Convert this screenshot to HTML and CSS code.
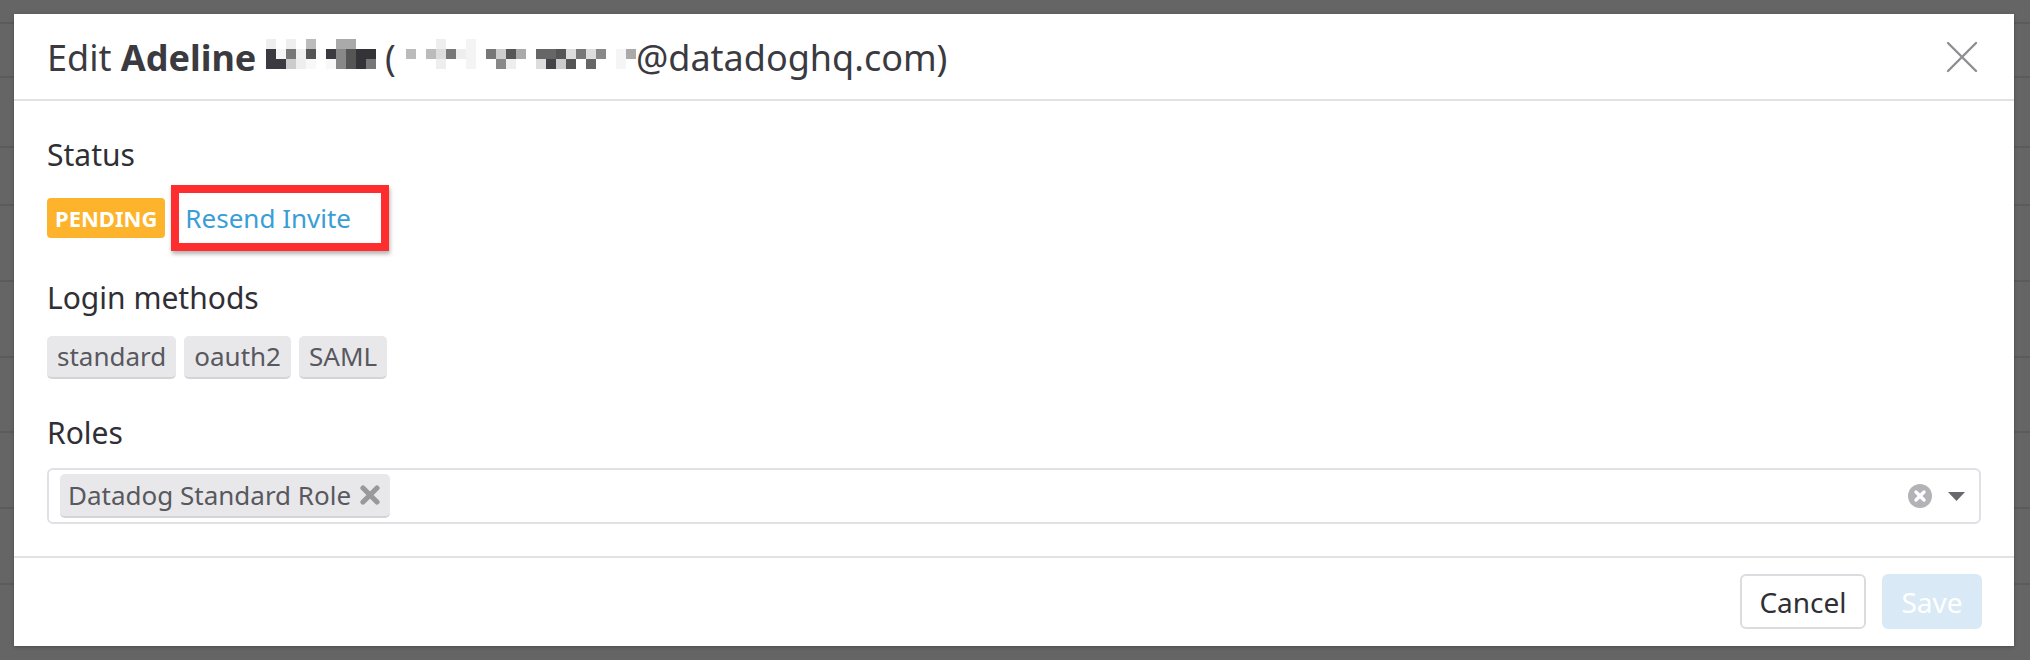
FILE: index.html
```html
<!DOCTYPE html>
<html lang="en">
<head>
<meta charset="utf-8">
<title>Edit user</title>
<link rel="stylesheet" href="styles.css">
</head>
<body>
<div class="backdrop">
  <div class="bg-row r1"></div>
  <div class="bg-row r2"></div>
  <div class="bg-row r3"></div>
  <div class="bg-row r4"></div>
  <div class="bg-row r5"></div>
  <div class="bg-row r5"></div>
  <div class="bg-row r6"></div>
  <div class="bg-row r5"></div>
  <div class="bg-row r5"></div>
</div>

<div class="modal">
  <header class="modal-header">
    <h1 class="modal-title">Edit <strong>Adeline</strong> <svg class="mosaic m1" width="110" height="30" viewBox="0 0 110 30" aria-hidden="true">
        <rect x="0" y="0" width="10" height="10" fill="#eeeeee"/>
        <rect x="20" y="0" width="10" height="10" fill="#eeeeee"/>
        <rect x="40" y="0" width="10" height="10" fill="#bbbbbb"/>
        <rect x="70" y="0" width="20" height="10" fill="#aaaaaa"/>
        <rect x="0" y="10" width="10" height="20" fill="#3a3a40"/>
        <rect x="10" y="10" width="10" height="10" fill="#f5f5f5"/>
        <rect x="10" y="20" width="10" height="10" fill="#3a3a40"/>
        <rect x="20" y="10" width="10" height="10" fill="#777777"/>
        <rect x="20" y="20" width="10" height="10" fill="#cccccc"/>
        <rect x="30" y="10" width="10" height="10" fill="#f0f0f0"/>
        <rect x="30" y="20" width="10" height="10" fill="#eeeeee"/>
        <rect x="40" y="10" width="10" height="10" fill="#555555"/>
        <rect x="40" y="20" width="10" height="10" fill="#f8f8f8"/>
        <rect x="60" y="10" width="10" height="10" fill="#3a3a40"/>
        <rect x="60" y="20" width="10" height="10" fill="#f8f8f8"/>
        <rect x="70" y="10" width="10" height="20" fill="#888888"/>
        <rect x="80" y="10" width="10" height="20" fill="#555555"/>
        <rect x="90" y="10" width="10" height="20" fill="#333338"/>
        <rect x="100" y="10" width="10" height="10" fill="#333338"/>
        <rect x="100" y="20" width="10" height="10" fill="#777777"/>
      </svg> (<svg class="mosaic m2" width="240" height="30" viewBox="0 0 240 30" aria-hidden="true">
        <rect x="10" y="10" width="10" height="10" fill="#bbbbbb"/>
        <rect x="30" y="10" width="10" height="10" fill="#bbbbbb"/>
        <rect x="40" y="0" width="10" height="10" fill="#eeeeee"/>
        <rect x="40" y="10" width="10" height="10" fill="#dddddd"/>
        <rect x="40" y="20" width="10" height="10" fill="#eeeeee"/>
        <rect x="50" y="10" width="10" height="10" fill="#777777"/>
        <rect x="60" y="10" width="10" height="10" fill="#eeeeee"/>
        <rect x="70" y="0" width="10" height="30" fill="#f4f4f4"/>
        <rect x="90" y="10" width="10" height="10" fill="#777777"/>
        <rect x="100" y="10" width="10" height="10" fill="#cccccc"/>
        <rect x="100" y="20" width="10" height="10" fill="#888888"/>
        <rect x="110" y="10" width="10" height="10" fill="#555555"/>
        <rect x="110" y="20" width="10" height="10" fill="#eeeeee"/>
        <rect x="120" y="10" width="10" height="10" fill="#aaaaaa"/>
        <rect x="140" y="10" width="10" height="10" fill="#666666"/>
        <rect x="140" y="20" width="10" height="10" fill="#dddddd"/>
        <rect x="150" y="10" width="10" height="10" fill="#666666"/>
        <rect x="150" y="20" width="10" height="10" fill="#444448"/>
        <rect x="160" y="10" width="10" height="10" fill="#555555"/>
        <rect x="160" y="20" width="10" height="10" fill="#cccccc"/>
        <rect x="170" y="10" width="10" height="10" fill="#dddddd"/>
        <rect x="170" y="20" width="10" height="10" fill="#555555"/>
        <rect x="180" y="10" width="10" height="10" fill="#777777"/>
        <rect x="190" y="10" width="10" height="10" fill="#dddddd"/>
        <rect x="190" y="20" width="10" height="10" fill="#666666"/>
        <rect x="200" y="10" width="10" height="10" fill="#888888"/>
        <rect x="220" y="10" width="10" height="20" fill="#f5f5f5"/>
        <rect x="230" y="10" width="10" height="10" fill="#aaaaaa"/>
      </svg>@datadoghq.com)</h1>
    <button class="close" type="button" aria-label="Close">
      <svg width="32" height="32" viewBox="0 0 32 32"><path d="M2 2 L30 30 M30 2 L2 30" stroke="#8e8e93" stroke-width="2.4" stroke-linecap="round" fill="none"/></svg>
    </button>
  </header>

  <div class="modal-body">
    <div class="label">Status</div>
    <div class="status-row">
      <span class="badge-pending">PENDING</span>
      <a class="resend" href="#">Resend Invite</a>
    </div>

    <div class="label label-login">Login methods</div>
    <div class="tags">
      <span class="tag">standard</span>
      <span class="tag">oauth2</span>
      <span class="tag">SAML</span>
    </div>

    <div class="label label-roles">Roles</div>
    <div class="select">
      <span class="role-tag">Datadog Standard Role
        <svg class="role-x" width="20" height="20" viewBox="0 0 20 20"><path d="M3 3 L17 17 M17 3 L3 17" stroke="#98989d" stroke-width="5.2" stroke-linecap="round"/></svg>
      </span>
      <span class="select-spacer"></span>
      <svg class="clear" width="24" height="24" viewBox="0 0 24 24"><circle cx="12" cy="12" r="12" fill="#b3b3b7"/><path d="M8 8 L16 16 M16 8 L8 16" stroke="#fff" stroke-width="3.4" stroke-linecap="round"/></svg>
      <svg class="caret" width="17" height="9" viewBox="0 0 17 9"><path d="M0 0 H17 L8.5 9 Z" fill="#68686d"/></svg>
    </div>
  </div>

  <footer class="modal-footer">
    <button class="btn btn-cancel" type="button">Cancel</button>
    <button class="btn btn-save" type="button">Save</button>
  </footer>
</div>
</body>
</html>
```

FILE: styles.css
```css
* { box-sizing: border-box; }

html, body {
  margin: 0;
  padding: 0;
}

body {
  width: 2030px;
  height: 660px;
  overflow: hidden;
  background: #656565;
  font-family: "Noto Sans", "Open Sans", sans-serif;
  position: relative;
}

.backdrop {
  display: flex;
  flex-direction: column;
}

.bg-row {
  border-bottom: 2px solid #5b5b5b;
}
.bg-row.r1 { height: 24px; }
.bg-row.r2 { height: 54px; }
.bg-row.r3 { height: 70px; }
.bg-row.r4 { height: 58px; }
.bg-row.r5 { height: 76px; }
.bg-row.r6 { height: 75px; }

.modal {
  position: absolute;
  left: 14px;
  top: 14px;
  width: 2000px;
  background: #fff;
  display: flex;
  flex-direction: column;
  box-shadow: 0 1px 4px rgba(0, 0, 0, 0.25);
  color: #2f2f35;
}

.modal-header {
  height: 87px;
  border-bottom: 2px solid #e1e1e6;
  display: flex;
  align-items: center;
  justify-content: space-between;
  padding: 3px 36px 0 33px;
}

.modal-title {
  margin: 0;
  font-size: 36px;
  line-height: 50px;
  font-weight: 400;
  color: #3a3a40;
  white-space: nowrap;
}

.modal-title strong {
  font-weight: 700;
}

.mosaic {
  vertical-align: 2px;
}

.close {
  border: 0;
  background: none;
  padding: 0;
  width: 32px;
  height: 32px;
  margin-top: -3px;
  display: flex;
  cursor: pointer;
}

.modal-body {
  padding: 34px 33px 32px 33px;
  display: flex;
  flex-direction: column;
  align-items: flex-start;
}

.label {
  font-size: 30px;
  line-height: 40px;
  color: #2f2f35;
}

.label-login { margin-top: 27px; }
.label-roles { margin-top: 34px; }

.status-row {
  margin-top: 10px;
  display: flex;
  align-items: center;
  gap: 6px;
}

.badge-pending {
  display: inline-block;
  height: 40px;
  line-height: 40px;
  padding: 0 8px;
  background: #fdb32c;
  color: #fff;
  font-weight: 700;
  font-size: 22px;
  letter-spacing: 0;
  border-radius: 4px;
}

.resend {
  display: block;
  width: 218px;
  height: 66px;
  border: 8px solid #ff2e2e;
  box-shadow: 1px 3px 4px rgba(0, 0, 0, 0.3);
  padding: 0 6px;
  font-size: 26px;
  line-height: 50px;
  color: #3a9ed6;
  text-decoration: none;
}

.tags {
  margin-top: 18px;
  display: flex;
  gap: 8px;
}

.tag {
  height: 43px;
  line-height: 41px;
  padding: 0 10px;
  background: #e8e8eb;
  border-bottom: 2px solid #d3d3d8;
  border-radius: 5px;
  font-size: 26px;
  color: #58585e;
}

.select {
  margin-top: 15px;
  width: 100%;
  height: 56px;
  border: 2px solid #e0e0e5;
  border-radius: 6px;
  display: flex;
  align-items: center;
  padding: 0 14px 0 11px;
}

.role-tag {
  display: flex;
  align-items: center;
  gap: 9px;
  height: 44px;
  padding: 0 10px 0 8px;
  background: #e8e8eb;
  border-bottom: 2px solid #d3d3d8;
  border-radius: 5px;
  font-size: 26px;
  color: #58585e;
}

.select-spacer { flex: 1; }

.clear { margin-right: 16px; }

.modal-footer {
  border-top: 2px solid #e1e1e6;
  padding: 16px 32px 17px;
  display: flex;
  justify-content: flex-end;
  gap: 16px;
}

.btn {
  height: 55px;
  border-radius: 6px;
  font-family: inherit;
  font-size: 28px;
  padding: 0;
}

.btn-cancel {
  width: 126px;
  background: #fff;
  border: 2px solid #dcdce0;
  color: #2f2f35;
}

.btn-save {
  width: 100px;
  background: #d9eaf6;
  border: 0;
  color: #fff;
}
```
